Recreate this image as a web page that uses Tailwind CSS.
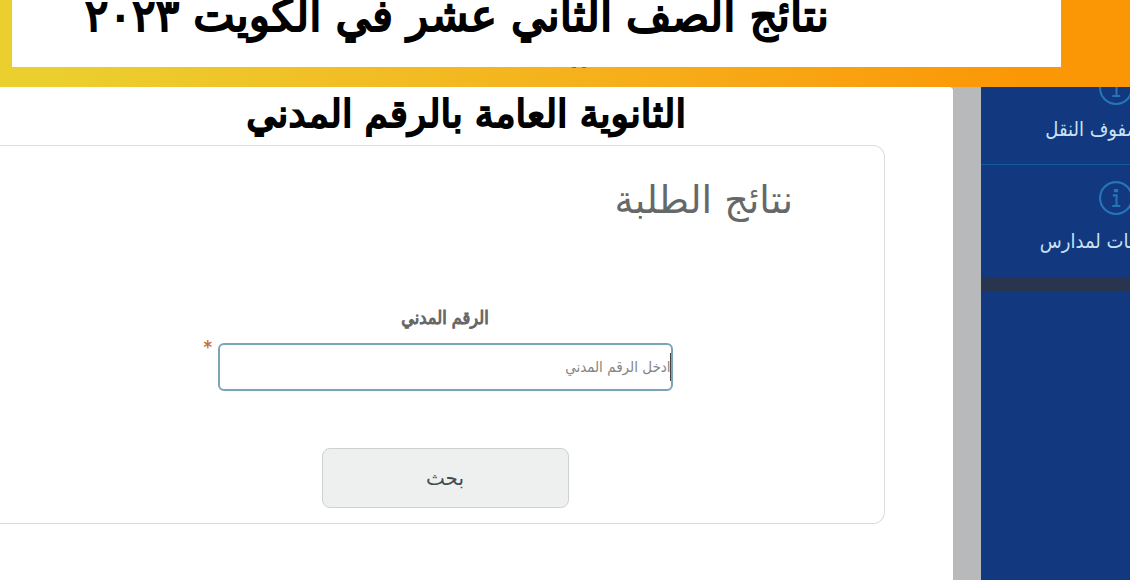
<!DOCTYPE html>
<html lang="ar">
<head>
<meta charset="utf-8">
<meta name="viewport" content="width=device-width, initial-scale=1">
<title>نتائج الطلبة</title>
<script src="https://cdn.jsdelivr.net/npm/@tailwindcss/browser@4"></script>
</head>
<body class="flex h-screen flex-col overflow-hidden bg-white font-['DejaVu_Sans_Condensed','DejaVu_Sans',sans-serif]">
  <header class="relative h-[87px] shrink-0 bg-linear-to-r from-[#ebcf2e] from-5% to-[#fb9705] to-90% pr-[69px] pl-3">
    <div class="flex h-[67px] items-end overflow-hidden bg-white pr-[232px]" dir="ltr">
      <h1 dir="rtl" class="w-full text-right font-['DejaVu_Sans',sans-serif] text-[44px] leading-[102px] font-normal whitespace-nowrap text-black [-webkit-text-stroke:2px_black]">نتائج الصف الثاني عشر في الكويت ٢٠٢٣</h1>
    </div>
    <div class="absolute top-[67px] left-[572px] flex gap-1.5" aria-hidden="true">
      <span class="h-px w-1 bg-[#7a6a50]"></span>
      <span class="h-px w-1 bg-[#7a6a50]"></span>
    </div>
  </header>
  <div class="flex flex-1 bg-[#b7b9ba]" dir="ltr">
    <main class="flex-1 rounded-tr bg-white">
      <h2 dir="rtl" class="pr-[267px] pb-1 text-right font-['DejaVu_Sans',sans-serif] text-[38px] leading-[54px] font-normal whitespace-nowrap text-black [-webkit-text-stroke:2px_black]">الثانوية العامة بالرقم المدني</h2>
      <section dir="rtl" class="mr-[68px] h-[379px] rounded-r-xl border border-l-0 border-[#dcdcdc] pt-6">
        <h3 class="pr-[91px] font-['DejaVu_Sans',sans-serif] text-[38px] leading-[60px] text-[#666968]">نتائج الطلبة</h3>
        <form class="mt-[68px] flex flex-col items-center pl-1.5" dir="ltr">
          <label for="civil" dir="rtl" class="text-[18px] leading-10 text-[#666] [-webkit-text-stroke:1px_#666]">الرقم المدني</label>
          <div class="relative mt-[5px] w-[455px]">
            <span class="absolute -top-2 -left-3.5 text-lg leading-6 font-bold text-[#c0703a]">*</span>
            <input id="civil" dir="rtl" type="text" placeholder="ادخل الرقم المدني" class="block h-12 w-full rounded-md border-2 border-[#7ba5b5] bg-white text-[15px] text-[#444] outline-none placeholder:text-[#858585]">
            <span class="absolute top-2.5 right-0.5 h-7 w-px bg-[#444]" aria-hidden="true"></span>
          </div>
          <button type="button" class="mt-[57px] h-[60px] w-[247px] rounded-lg border border-[#cfd1d1] bg-[#eef0ef] font-['DejaVu_Sans',sans-serif] text-[20px] text-[#444b4d]">بحث</button>
        </form>
      </section>
    </main>
    <div class="w-7"></div>
    <aside class="w-[149px] overflow-hidden bg-[#12387f] text-[20px] whitespace-nowrap text-[#c9e2f4]">
      <nav dir="ltr">
        <a href="#" class="flex h-[78px] flex-col border-b border-[#145a9f]">
          <svg class="-mt-4 ml-[118px] h-[34px] w-[34px] shrink-0 text-[#2675b8]" viewBox="0 0 32 32" fill="none" stroke="currentColor" stroke-width="2"><circle cx="16" cy="16" r="15"/><path d="M13 13.500h3.500v9.500M12.500 23.500h7.500"/><path d="M14.500 8h3v2h-3z" fill="currentColor" stroke-width="1"/></svg>
          <span dir="rtl" class="-mr-3 self-end leading-[48px]">صفوف النقل</span>
        </a>
        <a href="#" class="flex h-[112px] flex-col pt-4">
          <svg class="ml-[118px] h-[34px] w-[34px] shrink-0 text-[#2675b8]" viewBox="0 0 32 32" fill="none" stroke="currentColor" stroke-width="2"><circle cx="16" cy="16" r="15"/><path d="M13 13.500h3.500v9.500M12.500 23.500h7.500"/><path d="M14.500 8h3v2h-3z" fill="currentColor" stroke-width="1"/></svg>
          <span dir="rtl" class="-mr-1 self-end leading-[52px]">بات لمدارس</span>
        </a>
      </nav>
      <div class="h-3.5 bg-[#29354f]"></div>
    </aside>
  </div>
</body>
</html>
